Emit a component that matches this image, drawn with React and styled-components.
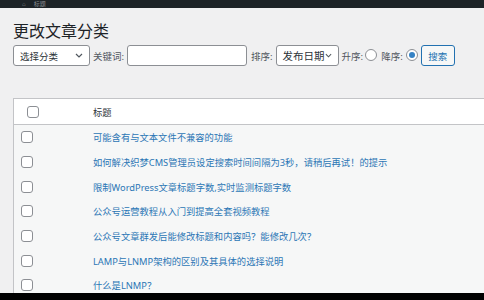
import styled, { createGlobalStyle } from "styled-components";

const Global = createGlobalStyle`
  html, body {
    margin: 0;
    padding: 0;
    background: #f0f0f1;
  }
  body {
    font-family: "Noto Sans", "Noto Sans CJK SC", sans-serif;
    color: #3c434a;
  }
`;

const Page = styled.div`
  height: 300px;
  display: flex;
  flex-direction: column;
  overflow: hidden;
`;

const TopBar = styled.div`
  height: 8px;
  flex: none;
  background: #1d2327;
  display: flex;
  align-items: center;
  gap: 8px;
  padding-left: 22px;
  color: #8c8f94;
  font-size: 6px;
  line-height: 8px;
`;

const TopItem = styled.span`
  white-space: nowrap;
`;

const Main = styled.div`
  flex: 1;
  overflow: hidden;
  padding: 13px 0 0 13px;
`;

const Title = styled.h1`
  margin: 0;
  font-size: 16px;
  font-weight: 400;
  line-height: 20px;
  color: #1d2327;
`;

const Filters = styled.div`
  margin-top: 4px;
  display: flex;
  align-items: center;
  height: 21px;
  font-size: 9.5px;
  white-space: nowrap;
`;

const Label = styled.span`
  color: #50575e;
  margin: 0 ${(p) => p.$right ?? 3}px 0 ${(p) => p.$left ?? 3}px;
`;

const Select = styled.div`
  box-sizing: border-box;
  width: ${(p) => p.$w}px;
  height: 21px;
  border: 1px solid #8c8f94;
  border-radius: 3px;
  background: #fff;
  display: flex;
  align-items: center;
  justify-content: space-between;
  padding: 0 6px 0 6px;
  color: #2c3338;
  font-size: ${(p) => p.$fs ?? 9.5}px;
`;

const Input = styled.div`
  box-sizing: border-box;
  width: 120px;
  height: 21px;
  border: 1px solid #8c8f94;
  border-radius: 3px;
  background: #fff;
`;

const Radio = styled.span`
  box-sizing: border-box;
  width: 12px;
  height: 12px;
  border-radius: 50%;
  border: 1px solid #8c8f94;
  background: #fff;
  display: inline-flex;
  align-items: center;
  justify-content: center;
  position: relative;
  top: -1px;
  &::after {
    content: "";
    width: 6px;
    height: 6px;
    border-radius: 50%;
    background: ${(p) => (p.$checked ? "#3582c4" : "transparent")};
  }
`;

const Button = styled.div`
  box-sizing: border-box;
  margin-left: 3px;
  width: 34px;
  height: 21px;
  border: 1px solid #2271b1;
  border-radius: 3px;
  background: #f6f7f7;
  color: #2271b1;
  display: flex;
  align-items: center;
  justify-content: center;
  font-size: 9.5px;
`;

const Table = styled.div`
  margin-top: 32px;
  width: 600px;
  border: 1px solid #c3c4c7;
  border-right: none;
  background: #f6f7f7;
  font-size: 9.3px;
`;

const HeadRow = styled.div`
  height: 25px;
  display: flex;
  align-items: center;
  background: #fff;
  border-bottom: 1px solid #c3c4c7;
`;

const Row = styled.div`
  height: 24.65px;
  display: flex;
  align-items: center;
`;

const CheckCell = styled.div`
  width: 79px;
  flex: none;
  padding-left: ${(p) => p.$pad}px;
  box-sizing: border-box;
  display: flex;
`;

const Box = styled.span`
  box-sizing: border-box;
  width: 12px;
  height: 12px;
  border: 1px solid #8c8f94;
  border-radius: 3px;
  background: #fff;
`;

const HeadText = styled.span`
  color: #2c3338;
`;

const Link = styled.span`
  color: #2b76b5;
  white-space: nowrap;
`;

const BottomBar = styled.div`
  height: 7px;
  flex: none;
  background: #000;
`;

const Chevron = () => (
  <svg width="8" height="5" viewBox="0 0 8 5" fill="none">
    <path d="M1 1l3 3 3-3" stroke="#50575e" strokeWidth="1.2" />
  </svg>
);

const posts = [
  "可能含有与文本文件不兼容的功能",
  "如何解决织梦CMS管理员设定搜索时间间隔为3秒，请稍后再试！的提示",
  "限制WordPress文章标题字数,实时监测标题字数",
  "公众号运营教程从入门到提高全套视频教程",
  "公众号文章群发后能修改标题和内容吗？能修改几次？",
  "LAMP与LNMP架构的区别及其具体的选择说明",
  "什么是LNMP？",
];

export default function App() {
  return (
    <Page>
      <Global />
      <TopBar>
        <TopItem>⌂</TopItem>
        <TopItem>标题</TopItem>
      </TopBar>
      <Main>
        <Title>更改文章分类</Title>
        <Filters>
          <Select $w={77}>
            选择分类
            <Chevron />
          </Select>
          <Label>关键词:</Label>
          <Input />
          <Label $left={4}>排序:</Label>
          <Select $w={63} $fs={10.5}>
            发布日期
            <Chevron />
          </Select>
          <Label $left={3} $right={2}>升序:</Label>
          <Radio />
          <Label $left={4} $right={3}>降序:</Label>
          <Radio $checked />
          <Button>搜索</Button>
        </Filters>
        <Table>
          <HeadRow>
            <CheckCell $pad={13}>
              <Box />
            </CheckCell>
            <HeadText>标题</HeadText>
          </HeadRow>
          {posts.map((t) => (
            <Row key={t}>
              <CheckCell $pad={7}>
                <Box />
              </CheckCell>
              <Link>{t}</Link>
            </Row>
          ))}
        </Table>
      </Main>
      <BottomBar />
    </Page>
  );
}
